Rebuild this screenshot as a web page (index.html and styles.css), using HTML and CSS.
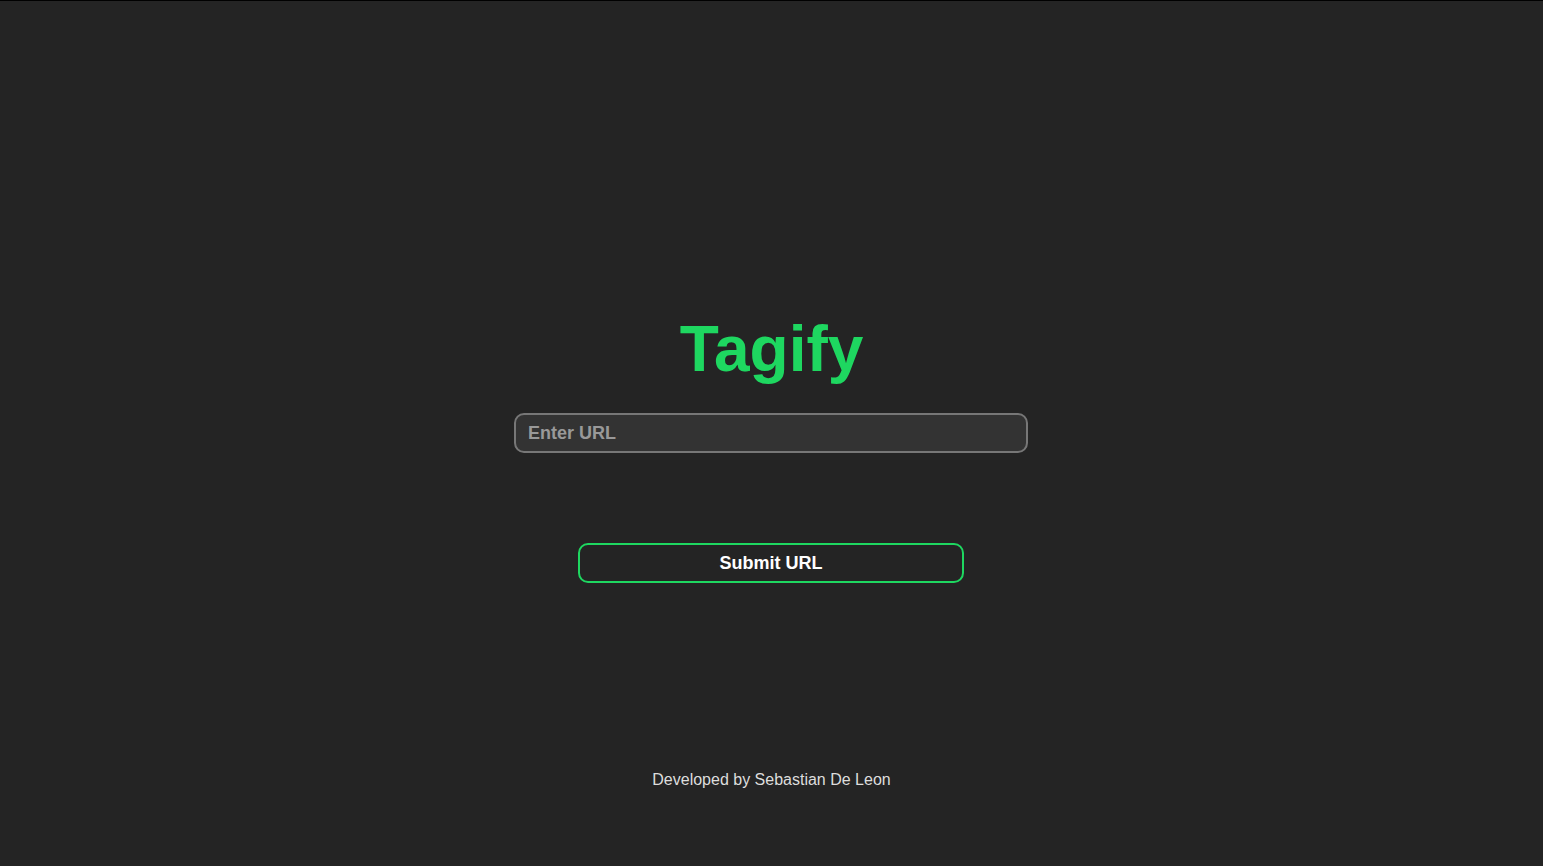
FILE: index.html
```html
<!DOCTYPE html>
<html lang="en">
<head>
<meta charset="utf-8">
<title>Tagify</title>
<link rel="stylesheet" href="styles.css">
</head>
<body>
<main class="page">
  <h1 class="title">Tagify</h1>
  <form class="form">
    <input class="url-input" type="text" placeholder="Enter URL">
    <button class="submit" type="button">Submit URL</button>
  </form>
  <footer class="footer">Developed by Sebastian De Leon</footer>
</main>
</body>
</html>
```
FILE: styles.css
```css
html, body {
  margin: 0;
  padding: 0;
  height: 100%;
  background: #242424;
}
body {
  box-sizing: border-box;
  border-top: 1px solid #000;
  font-family: "Liberation Sans", Arial, sans-serif;
}
.page {
  display: flex;
  flex-direction: column;
  align-items: center;
  padding-top: 311px;
}
.title {
  margin: 0;
  font-size: 64px;
  line-height: 74px;
  font-weight: 700;
  color: #1ed760;
}
.form {
  display: flex;
  flex-direction: column;
  align-items: center;
  margin-top: 27px;
}
.url-input {
  box-sizing: border-box;
  width: 514px;
  height: 40px;
  margin: 0 1px 0 0;
  padding: 0 12px;
  border: 2px solid #777;
  border-radius: 10px;
  background: #333;
  color: #fff;
  font-family: "Liberation Sans", Arial, sans-serif;
  font-size: 18px;
  font-weight: 700;
  outline: none;
}
.url-input::placeholder {
  color: #999;
}
.submit {
  box-sizing: border-box;
  width: 386px;
  height: 40px;
  margin: 90px 1px 0 0;
  border: 2px solid #1ed760;
  border-radius: 10px;
  background: transparent;
  color: #fff;
  font-family: "Liberation Sans", Arial, sans-serif;
  font-size: 18px;
  font-weight: 700;
}
.footer {
  margin-top: 188px;
  font-size: 16px;
  line-height: 18px;
  color: #ddd;
}
```
